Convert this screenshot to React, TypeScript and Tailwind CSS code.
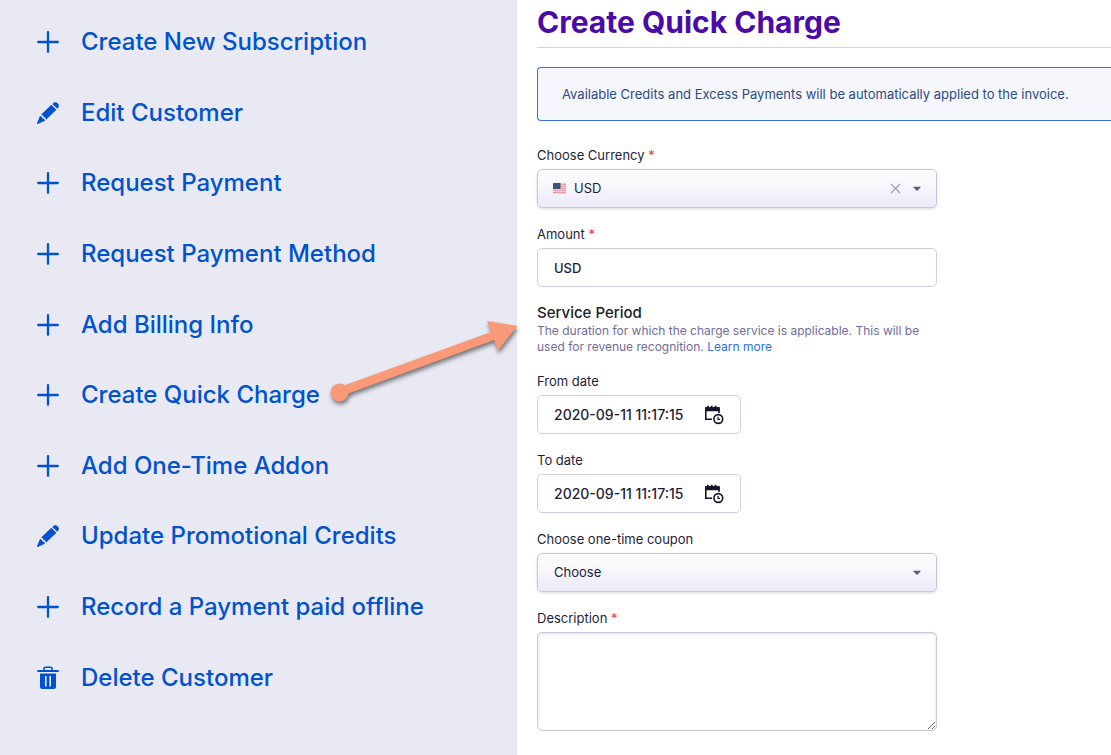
import React, { useState } from 'react';

type IconName = 'plus' | 'pencil' | 'trash';

interface Action {
  label: string;
  icon: IconName;
}

const actions: Action[] = [
  { label: 'Create New Subscription', icon: 'plus' },
  { label: 'Edit Customer', icon: 'pencil' },
  { label: 'Request Payment', icon: 'plus' },
  { label: 'Request Payment Method', icon: 'plus' },
  { label: 'Add Billing Info', icon: 'plus' },
  { label: 'Create Quick Charge', icon: 'plus' },
  { label: 'Add One-Time Addon', icon: 'plus' },
  { label: 'Update Promotional Credits', icon: 'pencil' },
  { label: 'Record a Payment paid offline', icon: 'plus' },
  { label: 'Delete Customer', icon: 'trash' }
];

const ActionIcon: React.FC<{ name: IconName }> = ({ name }) => {
  if (name === 'plus') {
    return (
      <svg className="w-[22px] h-[22px] shrink-0" viewBox="0 0 22 22" aria-hidden="true">
        <path d="M11 1.2v19.6M1.2 11h19.6" stroke="currentColor" strokeWidth="2.3" strokeLinecap="round" />
      </svg>
    );
  }
  if (name === 'pencil') {
    return (
      <svg className="w-[22px] h-[22px] shrink-0" viewBox="0 0 66 66" fill="currentColor" aria-hidden="true">
        <path d="M46 6c5-6 11-7 16-2s5 11-1 16L46 6z" />
        <path d="M43 8 58 23 27 53c-1-5-3-7-7-8-1-4-3-6-8-7L43 8z" />
        <path d="M9 42c4 1 7 4 7 7 4 1 7 3 8 7L2 66c-2 1-2-1-2-2L9 42z" />
      </svg>
    );
  }
  return (
    <svg className="w-[22px] h-6 shrink-0" viewBox="0 0 22 24" aria-hidden="true">
      <path d="M7 4.5V2.4Q7 1.2 8.2 1.2h5.6Q15 1.2 15 2.4v2.1" fill="none" stroke="currentColor" strokeWidth="1.6" />
      <path d="M1 5h20" stroke="currentColor" strokeWidth="1.8" strokeLinecap="round" />
      <path
        fill="currentColor"
        fillRule="evenodd"
        d="M3 7.5h16v13.4q0 2.1-2.1 2.1H5.1q-2.1 0-2.1-2.1zM8 10v10.500h1.600V10zM12.400 10v10.500h1.600V10z"
      />
    </svg>
  );
};

// Pointer from the quick charge action to its form
const Arrow: React.FC = () => (
  <svg
    className="absolute left-[325px] -top-12 w-[200px] h-[100px] pointer-events-none drop-shadow-[1px_3px_2px_rgba(0,0,0,0.5)]"
    viewBox="325 313 200 100"
    fill="#fa9977"
    aria-hidden="true"
  >
    <circle cx="339.5" cy="393.5" r="9" />
    <path d="M344 386.500 491 333 487 322 517.300 327 498 351.500 494 341 347 395z" />
  </svg>
);

const Caret: React.FC = () => (
  <svg className="absolute right-4 top-4 w-2 h-2 pointer-events-none" viewBox="0 0 8 8" fill="#5f5a8a" aria-hidden="true">
    <path d="M.8 1.800h6.400q.8 0 .3.700L4.600 5.400q-.6.500-1.200 0L.5 2.500q-.5-.7.300-.7z" />
  </svg>
);

const Flag: React.FC = () => (
  <svg className="absolute left-4 top-[14px] w-[13px] h-[11px] pointer-events-none" viewBox="0 0 13 11" aria-hidden="true">
    <rect width="13" height="11" rx="1" fill="#f7cdd0" />
    <path d="M0 1.500h13M0 3.500h13M0 5.500h13M0 7.500h13M0 9.500h13" stroke="#eb9da3" strokeWidth="1" />
    <path d="M1 0h6.500v6H0V1q0-1 1-1z" fill="#3d4f7c" />
  </svg>
);

const CalendarIcon: React.FC = () => (
  <svg className="w-5 h-5" viewBox="0 0 20 20" fill="none" stroke="#14142b" aria-hidden="true">
    <path d="M15 8V3H1.800v11.200H8" strokeWidth="1.600" />
    <path d="M1 2.300h2V.800h1.800v1.500h2V.800h1.800v1.500h2V.800h1.800v1.500h3.200v4H1z" fill="#14142b" stroke="none" />
    <circle cx="14.300" cy="14" r="4.400" strokeWidth="1.600" fill="#fff" />
    <path d="M14 11.800v2.500h2" strokeWidth="1.200" />
  </svg>
);

interface FieldProps {
  id: string;
  label: string;
  required?: boolean;
  children: React.ReactNode;
}

const Field: React.FC<FieldProps> = ({ id, label, required = false, children }) => (
  <div className="flex flex-col gap-1">
    <label htmlFor={id} className="text-[13px] leading-5">
      {label}
      {required && <span className="text-[#ee4023]"> *</span>}
    </label>
    {children}
  </div>
);

const selectClass =
  'block w-full h-[39px] appearance-none rounded-[5px] border border-[#c9c6df] bg-linear-to-b from-white to-[#ecebf8] pr-12 text-[13px] shadow-[0_1px_3px_rgba(0,0,0,0.15)]';

interface DateFieldProps {
  id: string;
  label: string;
}

const DateField: React.FC<DateFieldProps> = ({ id, label }) => {
  const [value, setValue] = useState('2020-09-11 11:17:15');

  return (
    <Field id={id} label={label}>
      <div className="flex items-center w-[204px] h-[39px] rounded-[5px] border border-[#d0cde4] px-4">
        <input
          id={id}
          type="text"
          value={value}
          onChange={(e) => setValue(e.target.value)}
          className="flex-1 min-w-0 text-sm font-medium outline-none"
        />
        <button type="button" aria-label={`Pick ${label.toLowerCase()}`}>
          <CalendarIcon />
        </button>
      </div>
    </Field>
  );
};

const App: React.FC = () => {
  const [currency, setCurrency] = useState('USD');
  const [amount, setAmount] = useState('USD');

  return (
    <div className="flex min-h-screen bg-white font-['Inter',sans-serif] text-[#1f1d36]">
      {/* Customer actions */}
      <nav className="w-[517px] shrink-0 flex bg-[#e9e9f4] pt-[7px] pb-[42px]">
        <ul className="flex-1 flex flex-col">
          {actions.map((action) => (
            <li key={action.label} className="relative flex-1 flex items-center pl-[37px]">
              <a href="#" className="flex items-center gap-[22px] text-2xl font-medium text-[#0052cf]">
                <ActionIcon name={action.icon} />
                {action.label}
              </a>
              {action.label === 'Create Quick Charge' && <Arrow />}
            </li>
          ))}
        </ul>
      </nav>

      {/* Quick charge form */}
      <main className="flex-1 min-w-0 pl-5">
        <h1 className="border-b border-[#d4d4d4] pt-1 pb-[7px] text-3xl leading-9 font-bold text-[#4a0ba6]">
          Create Quick Charge
        </h1>
        <p className="mt-[19px] flex items-center h-[54px] whitespace-nowrap rounded-l border border-r-0 border-[#3571d6] bg-[#f5f7fc] pl-6 pt-0.5 text-[13px] text-[#2d4a85]">
          Available Credits and Excess Payments will be automatically applied to the invoice.
        </p>

        <form className="mt-6 max-w-[400px] flex flex-col gap-4">
          <Field id="currency" label="Choose Currency" required>
            <div className="relative">
              <select
                id="currency"
                value={currency}
                onChange={(e) => setCurrency(e.target.value)}
                className={`${selectClass} pl-9`}
              >
                <option value="">Choose</option>
                <option value="USD">USD</option>
              </select>
              {currency && <Flag />}
              <button
                type="button"
                aria-label="Clear currency"
                onClick={() => setCurrency('')}
                className="absolute right-9 top-[14px]"
              >
                <svg className="w-[11px] h-[11px]" viewBox="0 0 11 11" aria-hidden="true">
                  <path d="M1 1l9 9M10 1l-9 9" stroke="#9a97c0" strokeWidth="1.1" />
                </svg>
              </button>
              <Caret />
            </div>
          </Field>

          <Field id="amount" label="Amount" required>
            <input
              id="amount"
              type="text"
              value={amount}
              onChange={(e) => setAmount(e.target.value)}
              className="h-[39px] rounded-[5px] border border-[#d0cde4] px-4 text-[13px] font-medium"
            />
          </Field>

          <div>
            <h2 className="text-[15px] leading-5 font-medium text-[#1b1b1f]">Service Period</h2>
            <p className="text-xs leading-4 text-[#6f6c99]">
              The duration for which the charge service is applicable. This will be used for revenue recognition.{' '}
              <a href="#" className="text-[#2f6fe0]">Learn more</a>
            </p>
          </div>

          <DateField id="fromDate" label="From date" />
          <DateField id="toDate" label="To date" />

          <Field id="coupon" label="Choose one-time coupon">
            <div className="relative">
              <select id="coupon" className={`${selectClass} pl-4`}>
                <option>Choose</option>
              </select>
              <Caret />
            </div>
          </Field>

          <Field id="description" label="Description" required>
            <textarea
              id="description"
              className="block h-[99px] rounded-[5px] border border-[#c9c6df] px-4 py-2 text-[13px] shadow-[inset_0_1px_3px_rgba(0,0,0,0.12)]"
            />
          </Field>
        </form>
      </main>
    </div>
  );
};

export default App;
